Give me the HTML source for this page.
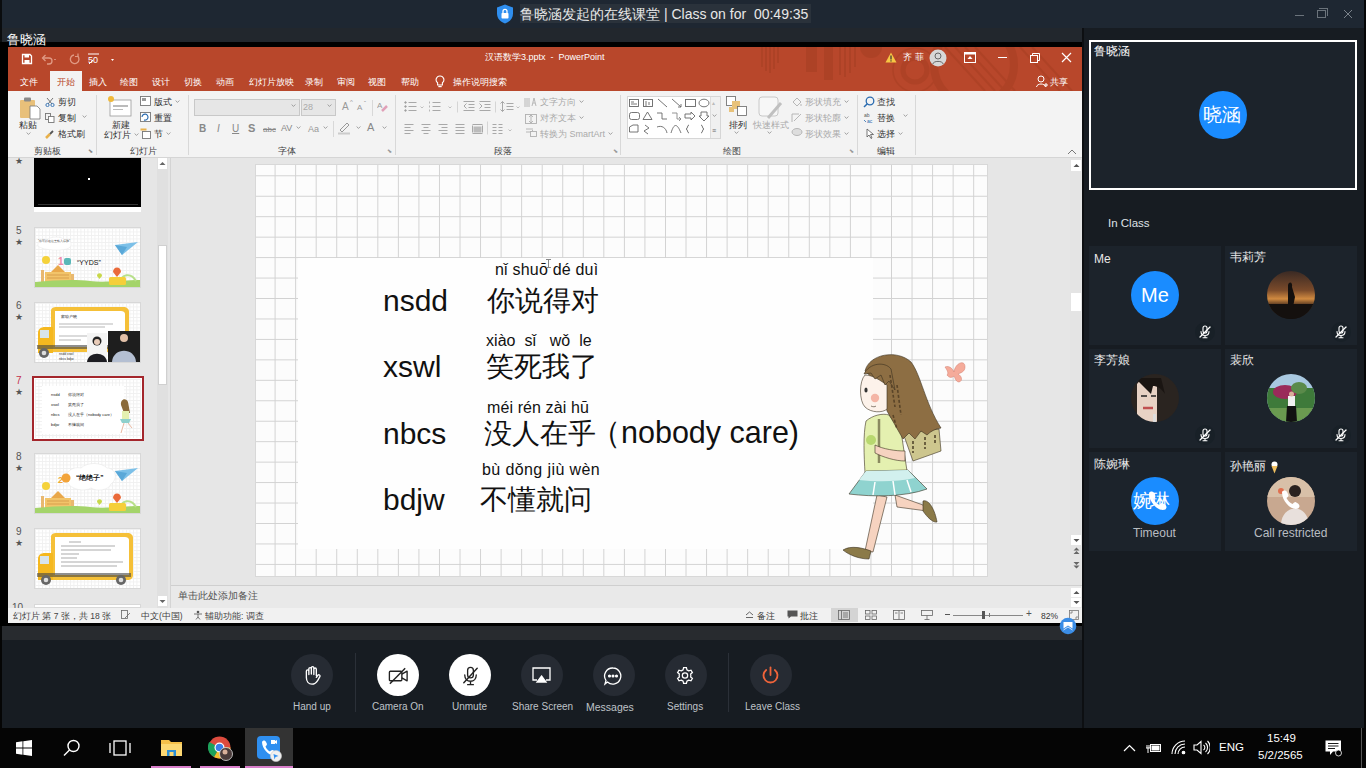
<!DOCTYPE html>
<html><head><meta charset="utf-8">
<style>
*{margin:0;padding:0;box-sizing:border-box}
html,body{width:1366px;height:768px;overflow:hidden;background:#171c22;font-family:"Liberation Sans",sans-serif}
.a{position:absolute}
.t{position:absolute;white-space:nowrap;line-height:1}
.rb{color:#2f2f2f;font-size:9px}
.gl{color:#444;font-size:9px}
.sep{position:absolute;width:1px;background:#d8d8d8}
</style></head><body>
<!-- top title bar -->
<div class="a" style="left:0;top:0;width:1366px;height:28px;background:#1e2732"></div>
<div class="a" style="left:0;top:0;width:2px;height:42px;background:#0a0c0e"></div>
<div class="a" style="left:1364px;top:0;width:2px;height:28px;background:#050607"></div><div class="a" style="left:1363px;top:28px;width:3px;height:700px;background:#050607"></div>
<!-- title center -->
<svg class="a" style="left:496px;top:4px" width="18" height="20" viewBox="0 0 18 20"><path d="M9 0.5 L17 3.5 V9.5 C17 14.5 13.5 17.8 9 19.5 C4.5 17.8 1 14.5 1 9.5 V3.5 Z" fill="#2f8ff0"/><rect x="5.5" y="9" width="7" height="5.5" rx="0.8" fill="#fff"/><path d="M7 9 V7.3 A2 2 0 0 1 11 7.3 V9" stroke="#fff" stroke-width="1.3" fill="none"/></svg>
<div class="a" style="left:520px;top:4px;width:291px;height:19px;background:#2a323b"></div>
<div class="t" style="left:520px;top:7px;font-size:14px;color:#e8e8e8">鲁晓涵发起的在线课堂 | Class on for&nbsp; 00:49:35</div>
<!-- window controls -->
<div class="a" style="left:1295px;top:15px;width:9px;height:1px;background:#6b737b"></div>
<div class="a" style="left:1317px;top:10px;width:9px;height:8px;border:1px solid #6b737b"></div>
<div class="a" style="left:1319px;top:8px;width:9px;height:8px;border-top:1px solid #6b737b;border-right:1px solid #6b737b"></div>
<svg class="a" style="left:1343px;top:9px" width="10" height="10"><path d="M1 1 L9 9 M9 1 L1 9" stroke="#7b838b" stroke-width="1"/></svg>

<!-- left share area -->
<div class="a" style="left:2px;top:28px;width:1080px;height:14px;background:#22272d"></div>
<div class="a" style="left:0;top:42px;width:1083px;height:584px;background:#000"></div>

<!-- PPT window -->
<div class="a" style="left:8px;top:47px;width:1074px;height:575px;background:#e6e6e6"></div>
<!-- ppt title bar -->
<div class="a" style="left:8px;top:47px;width:1074px;height:44px;background:#b8472b"></div>
<svg class="a" style="left:640px;top:47px" width="442" height="44" viewBox="0 0 442 44">
<g fill="#a53f22" opacity="0.55">
<rect x="121" y="0" width="2" height="20"/><rect x="125" y="0" width="2" height="24"/><rect x="129" y="0" width="2" height="26"/><rect x="133" y="0" width="2" height="22"/><rect x="137" y="0" width="2" height="16"/>
<rect x="166" y="0" width="11" height="25"/><rect x="184" y="0" width="9" height="33"/>
<rect x="199" y="0" width="2" height="28"/><rect x="204" y="0" width="2" height="30"/><rect x="209" y="0" width="2" height="26"/><rect x="214" y="0" width="2" height="20"/>
<circle cx="231" cy="0" r="11"/>
</g>
<g fill="none" stroke="#a53f22" opacity="0.5">
<circle cx="275" cy="23" r="12" stroke-width="5"/>
<circle cx="275" cy="23" r="22" stroke-width="1.5"/>
<circle cx="334" cy="18" r="40" stroke-width="8"/>
<path d="M305 0 L345 44 M315 0 L355 44 M325 0 L365 44 M335 0 L375 44 M380 0 L420 44 M392 0 L432 44" stroke-width="2"/>
</g>
</svg>
<!-- quick access -->
<svg class="a" style="left:21px;top:53px" width="100" height="12" viewBox="0 0 100 12">
<path d="M1.5 1.5 H9 L10.5 3 V10.5 H1.5 Z" fill="none" stroke="#fff" stroke-width="1.3"/><rect x="3.5" y="1.5" width="4.5" height="3" fill="#fff"/><rect x="3.5" y="7" width="5" height="3.5" fill="#fff"/>
<path d="M22 5 H28 A3 3 0 0 1 28 11 H26" fill="none" stroke="#e09a85" stroke-width="1.3"/><path d="M24.5 2 L21.5 5 L24.5 8" fill="none" stroke="#e09a85" stroke-width="1.3"/>
<rect x="33" y="6" width="2" height="1" fill="#d88a74"/>
<path d="M56.5 3 A4.3 4.3 0 1 1 53 2" fill="none" stroke="#e09a85" stroke-width="1.3"/><path d="M57 0.5 V3.5 H54" fill="none" stroke="#e09a85" stroke-width="1.2"/>
<rect x="67" y="0.5" width="11" height="1" fill="#fff"/><text x="67" y="10" font-size="9" fill="#fff" font-family="Liberation Sans">50</text><path d="M68 11 L72 7" stroke="#fff" stroke-width="1"/>
<path d="M90 6 L93 6 L91.5 8 Z" fill="#fff"/>
</svg>
<div class="t" style="left:485px;top:53px;font-size:9px;color:#fff;letter-spacing:0px">汉语数学3.pptx&nbsp; -&nbsp; PowerPoint</div>
<!-- right title items -->
<svg class="a" style="left:885px;top:52px" width="12" height="11" viewBox="0 0 12 11"><path d="M6 0.5 L11.5 10.5 H0.5 Z" fill="#f7c644"/><rect x="5.4" y="3.5" width="1.2" height="4" fill="#333"/><rect x="5.4" y="8.3" width="1.2" height="1.2" fill="#333"/></svg>
<div class="t" style="left:903px;top:53px;font-size:9px;color:#fff">齐 菲</div>
<svg class="a" style="left:929px;top:49px" width="18" height="18" viewBox="0 0 18 18"><circle cx="9" cy="9" r="8.5" fill="#d7d7d7"/><circle cx="9" cy="7" r="3" fill="none" stroke="#666" stroke-width="1"/><path d="M3.8 15 C4.5 11.5 13.5 11.5 14.2 15" fill="none" stroke="#666" stroke-width="1"/></svg>
<svg class="a" style="left:964px;top:52px" width="12" height="11" viewBox="0 0 12 11"><rect x="0.5" y="0.5" width="11" height="10" fill="none" stroke="#fff" stroke-width="1"/><rect x="0.5" y="0.5" width="11" height="2" fill="#fff"/><path d="M6 4 L3.5 7 H8.5 Z" fill="#fff"/></svg>
<div class="a" style="left:998px;top:57px;width:9px;height:1px;background:#fff"></div>
<svg class="a" style="left:1029px;top:52px" width="12" height="12" viewBox="0 0 12 12"><rect x="1.5" y="3.5" width="7" height="7" fill="none" stroke="#fff" stroke-width="1"/><path d="M3.5 3.5 V1.5 H10.5 V8.5 H8.5" fill="none" stroke="#fff" stroke-width="1"/></svg>
<svg class="a" style="left:1061px;top:52px" width="11" height="11"><path d="M1 1 L10 10 M10 1 L1 10" stroke="#fff" stroke-width="1.2"/></svg>
<!-- tabs -->
<div class="a" style="left:50px;top:71px;width:32px;height:20px;background:#f3f3f3"></div>
<div class="t" style="left:20px;top:78px;font-size:9px;color:#fff">文件</div>
<div class="t" style="left:57px;top:78px;font-size:9px;color:#b8472b">开始</div>
<div class="t" style="left:89px;top:78px;font-size:9px;color:#fff">插入</div>
<div class="t" style="left:120px;top:78px;font-size:9px;color:#fff">绘图</div>
<div class="t" style="left:152px;top:78px;font-size:9px;color:#fff">设计</div>
<div class="t" style="left:184px;top:78px;font-size:9px;color:#fff">切换</div>
<div class="t" style="left:216px;top:78px;font-size:9px;color:#fff">动画</div>
<div class="t" style="left:249px;top:78px;font-size:9px;color:#fff">幻灯片放映</div>
<div class="t" style="left:305px;top:78px;font-size:9px;color:#fff">录制</div>
<div class="t" style="left:337px;top:78px;font-size:9px;color:#fff">审阅</div>
<div class="t" style="left:368px;top:78px;font-size:9px;color:#fff">视图</div>
<div class="t" style="left:401px;top:78px;font-size:9px;color:#fff">帮助</div>
<svg class="a" style="left:435px;top:75px" width="10" height="13" viewBox="0 0 10 13"><path d="M5 1 A3.8 3.8 0 0 0 2.6 7.8 V10 H7.4 V7.8 A3.8 3.8 0 0 0 5 1 Z" fill="none" stroke="#fff" stroke-width="1.1"/><rect x="3.3" y="11" width="3.4" height="1.2" fill="#fff"/></svg>
<div class="t" style="left:453px;top:78px;font-size:9px;color:#fff">操作说明搜索</div>
<svg class="a" style="left:1036px;top:75px" width="12" height="13" viewBox="0 0 12 13"><circle cx="5" cy="4" r="3" fill="none" stroke="#fff" stroke-width="1"/><path d="M0.5 12 C1 8 9 8 9.5 12" fill="none" stroke="#fff" stroke-width="1"/><path d="M8 10 H12 M10 8 V12" stroke="#fff" stroke-width="1"/></svg>
<div class="t" style="left:1050px;top:78px;font-size:9px;color:#fff">共享</div>
<!-- ribbon -->
<div class="a" style="left:8px;top:91px;width:1074px;height:66px;background:#f3f3f3"></div>
<div class="a" style="left:8px;top:157px;width:1074px;height:1px;background:#d5d5d5"></div>
<!-- group 1 clipboard -->
<svg class="a" style="left:19px;top:96px" width="22" height="24" viewBox="0 0 22 24"><rect x="1" y="4" width="15" height="18" rx="1" fill="#e8c07a"/><rect x="5" y="1.5" width="7" height="4" rx="1" fill="#8a8a8a"/><path d="M11 10 H18 L21 13 V23 H11 Z" fill="#fff" stroke="#777" stroke-width="0.8"/></svg>
<div class="t rb" style="left:19px;top:121px">粘贴</div>
<div class="t rb" style="left:26px;top:131px;font-size:7px"><svg width="5" height="3" style="vertical-align:2px"><path d="M0.6 0.5 L2.5 2.4 L4.4 0.5" fill="none" stroke="#8a8a8a" stroke-width="0.8"/></svg></div>
<svg class="a" style="left:45px;top:97px" width="10" height="10" viewBox="0 0 10 10"><path d="M2 1 L7 7 M8 1 L3 7" stroke="#666" stroke-width="0.9"/><circle cx="2.5" cy="8" r="1.6" fill="none" stroke="#2b6cb0" stroke-width="0.9"/><circle cx="7.5" cy="8" r="1.6" fill="none" stroke="#2b6cb0" stroke-width="0.9"/></svg>
<div class="t rb" style="left:58px;top:98px">剪切</div>
<svg class="a" style="left:45px;top:113px" width="10" height="10" viewBox="0 0 10 10"><rect x="0.5" y="0.5" width="5" height="6" fill="none" stroke="#777" stroke-width="0.9"/><rect x="3.5" y="3.5" width="5.5" height="6" fill="#fff" stroke="#777" stroke-width="0.9"/></svg>
<div class="t rb" style="left:58px;top:114px">复制</div>
<div class="t rb" style="left:82px;top:114px;font-size:7px"><svg width="5" height="3" style="vertical-align:2px"><path d="M0.6 0.5 L2.5 2.4 L4.4 0.5" fill="none" stroke="#8a8a8a" stroke-width="0.8"/></svg></div>
<svg class="a" style="left:45px;top:129px" width="10" height="10" viewBox="0 0 10 10"><path d="M1 9 L5 5" stroke="#e8b04a" stroke-width="2.5"/><path d="M5 5 L8 2" stroke="#555" stroke-width="1.8"/></svg>
<div class="t rb" style="left:58px;top:130px">格式刷</div>
<div class="t gl" style="left:34px;top:147px">剪贴板</div>
<div class="t" style="left:88px;top:148px;font-size:6px;color:#888">⬊</div>
<div class="sep" style="left:96px;top:95px;height:60px"></div>
<!-- group 2 slides -->
<svg class="a" style="left:106px;top:95px" width="26" height="22" viewBox="0 0 26 22"><rect x="4" y="5" width="21" height="16" fill="#fff" stroke="#999" stroke-width="0.8"/><rect x="7" y="10" width="15" height="2" fill="#bbb"/><rect x="7" y="14" width="10" height="1" fill="#bbb"/><circle cx="5" cy="4" r="3" fill="#f0b93a"/></svg>
<div class="t rb" style="left:112px;top:121px">新建</div>
<div class="t rb" style="left:104px;top:131px">幻灯片 <svg width="5" height="3" style="vertical-align:2px"><path d="M0.6 0.5 L2.5 2.4 L4.4 0.5" fill="none" stroke="#8a8a8a" stroke-width="0.8"/></svg></div>
<svg class="a" style="left:140px;top:96px" width="11" height="10" viewBox="0 0 11 10"><rect x="0.5" y="0.5" width="10" height="9" fill="#fff" stroke="#777" stroke-width="0.9"/><rect x="2" y="2" width="4" height="3" fill="#999"/></svg>
<div class="t rb" style="left:154px;top:98px">版式 <svg width="5" height="3" style="vertical-align:2px"><path d="M0.6 0.5 L2.5 2.4 L4.4 0.5" fill="none" stroke="#8a8a8a" stroke-width="0.8"/></svg></div>
<svg class="a" style="left:140px;top:112px" width="11" height="10" viewBox="0 0 11 10"><rect x="0.5" y="0.5" width="10" height="9" fill="#fff" stroke="#777" stroke-width="0.9"/><path d="M2 5 A3 3 0 1 1 4 8" fill="none" stroke="#2b6cb0" stroke-width="1.2"/></svg>
<div class="t rb" style="left:154px;top:114px">重置</div>
<svg class="a" style="left:140px;top:128px" width="11" height="11" viewBox="0 0 11 11"><rect x="2.5" y="3.5" width="8" height="7" fill="#fff" stroke="#777" stroke-width="0.9"/><rect x="0.5" y="0.5" width="6" height="2" fill="#e8b04a"/></svg>
<div class="t rb" style="left:154px;top:130px">节 <svg width="5" height="3" style="vertical-align:2px"><path d="M0.6 0.5 L2.5 2.4 L4.4 0.5" fill="none" stroke="#8a8a8a" stroke-width="0.8"/></svg></div>
<div class="t gl" style="left:130px;top:147px">幻灯片</div>
<div class="sep" style="left:188px;top:95px;height:60px"></div>
<!-- group 3 font -->
<div class="a" style="left:194px;top:99px;width:106px;height:17px;background:#e6e6e6;border:1px solid #c8c8c8"></div>
<div class="t" style="left:291px;top:104px;font-size:6px;color:#aaa"><svg width="5" height="3" style="vertical-align:2px"><path d="M0.6 0.5 L2.5 2.4 L4.4 0.5" fill="none" stroke="#8a8a8a" stroke-width="0.8"/></svg></div>
<div class="a" style="left:301px;top:99px;width:35px;height:17px;background:#e6e6e6;border:1px solid #c8c8c8"></div>
<div class="t" style="left:303px;top:103px;font-size:9px;color:#aaa">28</div>
<div class="t" style="left:327px;top:104px;font-size:6px;color:#aaa"><svg width="5" height="3" style="vertical-align:2px"><path d="M0.6 0.5 L2.5 2.4 L4.4 0.5" fill="none" stroke="#8a8a8a" stroke-width="0.8"/></svg></div>
<div class="t" style="left:342px;top:102px;font-size:10px;color:#999">A</div><div class="t" style="left:350px;top:99px;font-size:6px;color:#999">^</div>
<div class="t" style="left:357px;top:104px;font-size:8px;color:#999">A</div><div class="t" style="left:364px;top:100px;font-size:6px;color:#999">ˇ</div>
<div class="sep" style="left:372px;top:100px;height:16px"></div>
<svg class="a" style="left:377px;top:100px" width="11" height="12" viewBox="0 0 11 12"><text x="0" y="8" font-size="8" fill="#999" font-family="Liberation Sans">A</text><path d="M5 11 L10 6" stroke="#e0a0b8" stroke-width="2.5"/></svg>
<div class="t" style="left:199px;top:124px;font-size:10px;color:#888;font-weight:bold">B</div>
<div class="t" style="left:217px;top:124px;font-size:10px;color:#888;font-style:italic">I</div>
<div class="t" style="left:232px;top:124px;font-size:10px;color:#888;text-decoration:underline">U</div>
<div class="t" style="left:248px;top:123px;font-size:11px;color:#888;font-weight:bold">S</div>
<div class="t" style="left:263px;top:126px;font-size:8px;color:#888;text-decoration:line-through">abc</div>
<div class="t" style="left:281px;top:124px;font-size:9px;color:#888">AV</div><div class="t" style="left:296px;top:126px;font-size:6px;color:#aaa"><svg width="5" height="3" style="vertical-align:2px"><path d="M0.6 0.5 L2.5 2.4 L4.4 0.5" fill="none" stroke="#8a8a8a" stroke-width="0.8"/></svg></div>
<div class="t" style="left:308px;top:125px;font-size:9px;color:#999">Aa</div><div class="t" style="left:323px;top:126px;font-size:6px;color:#aaa"><svg width="5" height="3" style="vertical-align:2px"><path d="M0.6 0.5 L2.5 2.4 L4.4 0.5" fill="none" stroke="#8a8a8a" stroke-width="0.8"/></svg></div>
<div class="sep" style="left:333px;top:121px;height:16px"></div>
<svg class="a" style="left:338px;top:121px" width="14" height="14" viewBox="0 0 14 14"><path d="M2 9 L9 2 L11 4 L4 11 Z" fill="none" stroke="#999" stroke-width="1"/><rect x="0" y="11.5" width="12" height="2" fill="#ccc"/></svg>
<div class="t" style="left:356px;top:126px;font-size:6px;color:#aaa"><svg width="5" height="3" style="vertical-align:2px"><path d="M0.6 0.5 L2.5 2.4 L4.4 0.5" fill="none" stroke="#8a8a8a" stroke-width="0.8"/></svg></div>
<div class="t" style="left:367px;top:122px;font-size:11px;color:#888">A</div>
<div class="t" style="left:382px;top:126px;font-size:6px;color:#aaa"><svg width="5" height="3" style="vertical-align:2px"><path d="M0.6 0.5 L2.5 2.4 L4.4 0.5" fill="none" stroke="#8a8a8a" stroke-width="0.8"/></svg></div>
<div class="t gl" style="left:278px;top:147px">字体</div>
<div class="t" style="left:387px;top:148px;font-size:6px;color:#999">⬊</div>
<div class="sep" style="left:395px;top:95px;height:60px"></div>
<!-- group 4 paragraph -->
<svg class="a" style="left:402px;top:100px" width="220" height="36" viewBox="0 0 220 36" stroke="#a8a8a8" stroke-width="1" fill="none"><g transform="translate(0.5,0.5)">
<g><circle cx="3" cy="2" r="0.8" fill="#999"/><circle cx="3" cy="6" r="0.8" fill="#999"/><circle cx="3" cy="10" r="0.8" fill="#999"/><path d="M6 2H14M6 6H14M6 10H14"/></g>
<path d="M18 6 L19.5 7.5 L21 6" stroke-width="0.7"/>
<g><path d="M27 1V3 M27 5V7 M27 9V11" stroke-width="0.8"/><path d="M30 2H38M30 6H38M30 10H38"/></g>
<path d="M46 6 L47.5 7.5 L49 6" stroke-width="0.7"/>
<path d="M55 1V12" stroke="#d5d5d5"/>
<g><path d="M61 1H72M66 4H72M66 7H72M61 10H72"/><path d="M64 3 L61.5 5.5 L64 8"/></g>
<g><path d="M77 1H88M82 4H88M82 7H88M77 10H88"/><path d="M77 3 L79.5 5.5 L77 8"/></g>
<path d="M93 1V12" stroke="#d5d5d5"/>
<g><path d="M100 1V11M98 3L100 1L102 3M98 9L100 11L102 9"/><path d="M104 3H111M104 6H111M104 9H111"/></g>
<path d="M114 6 L115.5 7.5 L117 6" stroke-width="0.7"/>
<!-- row2 -->
<g transform="translate(0,23)"><path d="M2 1H11M2 4H8M2 7H11M2 10H8"/></g>
<g transform="translate(18,23)"><path d="M1 1H10M3 4H8M1 7H10M3 10H8"/></g>
<g transform="translate(35,23)"><path d="M1 1H10M4 4H10M1 7H10M4 10H10"/></g>
<g transform="translate(52,23)"><path d="M1 1H10M1 4H10M1 7H10M1 10H10"/></g>
<g transform="translate(69,23)"><path d="M1 1H11M1 10H11M1 2V9M11 2V9"/><rect x="2" y="3" width="8" height="6" fill="#bbb" stroke="none"/></g>
<path d="M85 21V34" stroke="#d5d5d5"/>
<g transform="translate(89,23)"><path d="M1 1H5M1 4H5M1 7H5M1 10H5M7 1H11M7 4H11M7 7H11M7 10H11"/></g>
<path d="M106 29 L107.5 30.5 L109 29" stroke-width="0.7"/>
</g></svg>
<svg class="a" style="left:524px;top:96px" width="14" height="42" viewBox="0 0 14 42" stroke="#b0b0b0" fill="none" stroke-width="0.9">
<path d="M1 2V11M3 2V11M5 2V11"/><path d="M8 10 L10 2 L12 10 M9 7H11"/>
<rect x="1.5" y="18.5" width="11" height="9"/><path d="M7 19V27M5 21L7 19L9 21M5 25L7 27L9 25"/>
<path d="M2 33H9M2 36H6M7 36 L9 34"/><rect x="6.5" y="35.5" width="6" height="5"/>
</svg>
<div class="t" style="left:540px;top:98px;font-size:9px;color:#aaa">文字方向 <svg width="5" height="3" style="vertical-align:2px"><path d="M0.6 0.5 L2.5 2.4 L4.4 0.5" fill="none" stroke="#8a8a8a" stroke-width="0.8"/></svg></div>
<div class="t" style="left:540px;top:114px;font-size:9px;color:#aaa">对齐文本 <svg width="5" height="3" style="vertical-align:2px"><path d="M0.6 0.5 L2.5 2.4 L4.4 0.5" fill="none" stroke="#8a8a8a" stroke-width="0.8"/></svg></div>
<div class="t" style="left:540px;top:130px;font-size:9px;color:#aaa">转换为 SmartArt <svg width="5" height="3" style="vertical-align:2px"><path d="M0.6 0.5 L2.5 2.4 L4.4 0.5" fill="none" stroke="#8a8a8a" stroke-width="0.8"/></svg></div>
<div class="t gl" style="left:494px;top:147px">段落</div>
<div class="t" style="left:613px;top:148px;font-size:6px;color:#999">⬊</div>
<div class="sep" style="left:620px;top:95px;height:60px"></div>
<!-- group 5 drawing -->
<div class="a" style="left:627px;top:96px;width:94px;height:43px;background:#fff;border:1px solid #d6d6d6"></div>
<div class="a" style="left:710px;top:97px;width:10px;height:41px;background:#f0f0f0;border-left:1px solid #ddd"></div>
<svg class="a" style="left:628px;top:97px" width="92" height="42" viewBox="0 0 92 42" stroke="#666" stroke-width="0.9" fill="none"><g transform="translate(0,0)">
<rect x="1.5" y="2.5" width="9" height="7"/><path d="M3 5H6M3 7H9"/>
<rect x="15.5" y="2.5" width="9" height="7"/><path d="M18 4V9M21 5V8"/>
<path d="M30 2 L39 10"/><path d="M44 2 L53 10 M50 10H53V7"/>
<rect x="57.5" y="2.5" width="10" height="7"/><ellipse cx="76" cy="6" rx="5" ry="3.8"/>
<rect x="1.5" y="15.5" width="10" height="7" rx="2"/><path d="M15 22.5 L19.5 15 L24 22.5 Z"/>
<path d="M29 16H34V22H39"/><path d="M44 16H49V22H53 M51 20L53 22L51 24" stroke="#888"/>
<path d="M57 17H63V15L67 19L63 23V21H57Z"/><path d="M73 15H79V19H81L76 24L71 19H73Z"/>
<path d="M1.5 35 V30 L5 28 H10 V35 Z"/><path d="M17 28 L21 31 L16 34 L20 37" />
<path d="M29 30 C34 28 38 31 39 36"/><path d="M43 36 C46 26 49 26 53 36"/>
<path d="M61 28 C59 28 60 32 58 32 C60 32 59 36 61 36"/><path d="M73 28 C75 28 74 32 76 32 C74 32 75 36 73 36"/>
</g></svg>
<div class="t" style="left:712px;top:100px;font-size:6px;color:#bbb">▴</div>
<div class="t" style="left:712px;top:114px;font-size:6px;color:#666"><svg width="5" height="3" style="vertical-align:2px"><path d="M0.6 0.5 L2.5 2.4 L4.4 0.5" fill="none" stroke="#8a8a8a" stroke-width="0.8"/></svg></div>
<div class="t" style="left:712px;top:127px;font-size:7px;color:#666">≡</div>
<svg class="a" style="left:726px;top:96px" width="22" height="20" viewBox="0 0 22 20"><rect x="0.5" y="0.5" width="9" height="9" fill="#fff" stroke="#666" stroke-width="0.8"/><rect x="6" y="5" width="8" height="8" fill="#e8c27a"/><rect x="11.5" y="10.5" width="9" height="9" fill="#fff" stroke="#666" stroke-width="0.8"/><rect x="3" y="11" width="5" height="5" fill="#e8c27a"/></svg>
<div class="t rb" style="left:729px;top:121px">排列</div>
<div class="t" style="left:734px;top:131px;font-size:6px;color:#888"><svg width="5" height="3" style="vertical-align:2px"><path d="M0.6 0.5 L2.5 2.4 L4.4 0.5" fill="none" stroke="#8a8a8a" stroke-width="0.8"/></svg></div>
<svg class="a" style="left:758px;top:96px" width="26" height="24" viewBox="0 0 26 24"><rect x="1" y="1" width="19" height="19" rx="3" fill="#f7f7f7" stroke="#c8c8c8" stroke-width="1"/><path d="M10 22 L23 7" stroke="#c0c0c0" stroke-width="3"/></svg>
<div class="t" style="left:753px;top:121px;font-size:9px;color:#aaa">快速样式</div>
<div class="t" style="left:767px;top:131px;font-size:6px;color:#bbb"><svg width="5" height="3" style="vertical-align:2px"><path d="M0.6 0.5 L2.5 2.4 L4.4 0.5" fill="none" stroke="#8a8a8a" stroke-width="0.8"/></svg></div>
<svg class="a" style="left:791px;top:96px" width="12" height="42" viewBox="0 0 12 42" fill="none" stroke="#b0b0b0" stroke-width="0.9">
<path d="M2 6 L6 2 L10 6 L6 10 Z"/><path d="M10 8 V10"/>
<path d="M1 26 L1 18 H8 M3 25 L10 18"/>
<ellipse cx="6" cy="36" rx="5" ry="3.5" fill="#ddd"/>
</svg>
<div class="t" style="left:805px;top:98px;font-size:9px;color:#aaa">形状填充 <svg width="5" height="3" style="vertical-align:2px"><path d="M0.6 0.5 L2.5 2.4 L4.4 0.5" fill="none" stroke="#8a8a8a" stroke-width="0.8"/></svg></div>
<div class="t" style="left:805px;top:114px;font-size:9px;color:#aaa">形状轮廓 <svg width="5" height="3" style="vertical-align:2px"><path d="M0.6 0.5 L2.5 2.4 L4.4 0.5" fill="none" stroke="#8a8a8a" stroke-width="0.8"/></svg></div>
<div class="t" style="left:805px;top:130px;font-size:9px;color:#aaa">形状效果 <svg width="5" height="3" style="vertical-align:2px"><path d="M0.6 0.5 L2.5 2.4 L4.4 0.5" fill="none" stroke="#8a8a8a" stroke-width="0.8"/></svg></div>
<div class="t gl" style="left:723px;top:147px">绘图</div>
<div class="t" style="left:849px;top:148px;font-size:6px;color:#999">⬊</div>
<div class="sep" style="left:857px;top:95px;height:60px"></div>
<!-- group 6 editing -->
<svg class="a" style="left:863px;top:96px" width="12" height="12" viewBox="0 0 12 12"><circle cx="7" cy="5" r="3.8" fill="none" stroke="#2b6cb0" stroke-width="1.3"/><path d="M4.3 7.7 L1 11" stroke="#2b6cb0" stroke-width="1.5"/></svg>
<div class="t rb" style="left:877px;top:98px;color:#333">查找</div>
<svg class="a" style="left:863px;top:112px" width="12" height="12" viewBox="0 0 12 12"><text x="1" y="5" font-size="5" fill="#555" font-family="Liberation Sans">ab</text><text x="4" y="11" font-size="5" fill="#2b6cb0" font-family="Liberation Sans">ac</text><path d="M1 8 L3 10" stroke="#2b6cb0" stroke-width="0.8"/></svg>
<div class="t rb" style="left:877px;top:114px;color:#333">替换</div>
<div class="t" style="left:903px;top:114px;font-size:6px;color:#555"><svg width="5" height="3" style="vertical-align:2px"><path d="M0.6 0.5 L2.5 2.4 L4.4 0.5" fill="none" stroke="#8a8a8a" stroke-width="0.8"/></svg></div>
<svg class="a" style="left:866px;top:128px" width="9" height="11" viewBox="0 0 9 11"><path d="M1 1 V9 L3 7 L5 10.5 L6 10 L4.5 6.5 H7.5 Z" fill="#fff" stroke="#555" stroke-width="0.8"/></svg>
<div class="t rb" style="left:877px;top:130px;color:#333">选择 <svg width="5" height="3" style="vertical-align:2px"><path d="M0.6 0.5 L2.5 2.4 L4.4 0.5" fill="none" stroke="#8a8a8a" stroke-width="0.8"/></svg></div>
<div class="t gl" style="left:877px;top:147px;color:#333">编辑</div>
<div class="sep" style="left:915px;top:95px;height:60px"></div>
<svg class="a" style="left:1067px;top:149px" width="10" height="6"><path d="M1 5 L5 1 L9 5" fill="none" stroke="#777" stroke-width="1"/></svg>
<div class="a" style="left:8px;top:158px;width:162px;height:450px;background:#e6e6e6"></div>
<div class="a" style="left:170px;top:158px;width:1px;height:450px;background:#d4d4d4"></div>
<div class="a" style="left:157px;top:158px;width:11px;height:450px;background:#e0e0e0"></div>
<div class="a" style="left:158px;top:158px;width:9px;height:11px;background:#fff"></div>
<svg class="a" style="left:159px;top:161px" width="7" height="5"><path d="M0.5 4 L3.5 1 L6.5 4 Z" fill="#666"/></svg>
<div class="a" style="left:158px;top:245px;width:9px;height:140px;background:#fff;border:1px solid #d0d0d0"></div>
<div class="a" style="left:158px;top:596px;width:9px;height:10px;background:#fff"></div>
<svg class="a" style="left:159px;top:599px" width="7" height="5"><path d="M0.5 1 L3.5 4 L6.5 1 Z" fill="#666"/></svg>
<div class="t" style="left:16px;top:226px;font-size:10px;color:#555">5</div>
<div class="t" style="left:15px;top:238px;font-size:9px;color:#555">★</div>
<div class="t" style="left:16px;top:301px;font-size:10px;color:#555">6</div>
<div class="t" style="left:15px;top:313px;font-size:9px;color:#555">★</div>
<div class="t" style="left:16px;top:376px;font-size:10px;color:#c4314b">7</div>
<div class="t" style="left:15px;top:388px;font-size:9px;color:#555">★</div>
<div class="t" style="left:16px;top:452px;font-size:10px;color:#555">8</div>
<div class="t" style="left:15px;top:464px;font-size:9px;color:#555">★</div>
<div class="t" style="left:16px;top:527px;font-size:10px;color:#555">9</div>
<div class="t" style="left:15px;top:539px;font-size:9px;color:#555">★</div>
<div class="t" style="left:12px;top:603px;font-size:10px;color:#555">10</div>
<div class="t" style="left:15px;top:157px;font-size:9px;color:#555">★</div>
<div class="a" style="left:34px;top:158px;width:107px;height:54px;background:#fff"></div>
<div class="a" style="left:34px;top:158px;width:107px;height:49px;background:#000"></div>
<div class="a" style="left:38px;top:204px;width:100px;height:1px;background:#333"></div>
<div class="a" style="left:88px;top:178px;width:2px;height:2px;background:#fff"></div>
<div class="a" style="left:34px;top:227px;width:107px;height:61px;background:#fff;border:1px solid #d8d8d8"></div>
<div class="a" style="left:35px;top:228px;width:105px;height:59px;background-image:linear-gradient(#f0f0f0 1px,transparent 1px),linear-gradient(90deg,#f0f0f0 1px,transparent 1px);background-size:3.5px 3.5px"></div>
<svg class="a" style="left:35px;top:228px" width="105" height="59" viewBox="0 0 105 59"><path d="M3 18 C2 12 8 10 12 12 C16 8 26 8 30 12 C36 11 38 17 34 20 C30 23 8 23 3 18 Z" fill="#fff" stroke="#e6e6e6" stroke-width="0.5"/><text x="3" y="14" font-size="3" fill="#444" font-family="Liberation Sans">“你可以在这里输入标题”</text><text x="23" y="37" font-size="10" fill="#f08aa8" font-weight="bold" font-family="Liberation Sans">1</text><rect x="29" y="30" width="7" height="7" rx="2" fill="#5ab8b8"/><text x="42" y="37" font-size="7" fill="#111" font-family="Liberation Sans">“YYDS”</text><g><rect x="10" y="44" width="26" height="11" fill="#f2c46a"/><path d="M16 44 L23 37 L30 44 Z" fill="#e9a84a"/><path d="M12 47 H34 M12 50 H34" stroke="#c8883a" stroke-width="0.6"/><rect x="6" y="42" width="3" height="13" fill="#e8b870"/><rect x="36" y="46" width="3" height="9" fill="#e8b870"/><path d="M0 54 C20 52 40 51 55 53 C70 55 90 52 105 52 V59 H0 Z" fill="#a4d46a"/><path d="M85 55 C86 46 96 44 101 53" fill="none" stroke="#b8e08a" stroke-width="2"/><rect x="74" y="49" width="17" height="8" rx="1.5" fill="#f5cf3a"/><path d="M78 44 A4 4.5 0 1 1 86 44 L82 49 Z" fill="#ea6a3a"/><path d="M62 48 A2.5 2.8 0 1 1 67 48 L64.5 51 Z" fill="#c8d84a"/><path d="M80 17 L103 14 L87 27 Z" fill="#7cc0e8"/><path d="M80 17 L92 19 L87 27 Z" fill="#5aa8d8"/><circle cx="11" cy="32" r="4" fill="#f5d23a"/></g></svg>
<div class="a" style="left:34px;top:302px;width:107px;height:61px;background:#fff;border:1px solid #d8d8d8"></div>
<div class="a" style="left:35px;top:303px;width:105px;height:59px;background-image:linear-gradient(#f0f0f0 1px,transparent 1px),linear-gradient(90deg,#f0f0f0 1px,transparent 1px);background-size:3.5px 3.5px"></div>
<svg class="a" style="left:35px;top:303px" width="105" height="59" viewBox="0 0 105 59"><path d="M16 8 C16 5 18 4 22 4 H88 C92 4 94 6 94 9 V44 C94 47 92 49 88 49 H16 Z" fill="#f5c038"/><path d="M20 8 H86 C88 8 90 9 90 11 V44 H20 Z" fill="#fff"/><path d="M3 30 C3 26 6 24 10 24 H18 V50 H3 Z" fill="#f5b81f"/><rect x="5" y="27" width="9" height="8" fill="#d8e4ec"/><rect x="2" y="42" width="90" height="4" fill="#444" opacity="0.6"/><circle cx="9" cy="50" r="5" fill="#666"/><circle cx="9" cy="50" r="2.3" fill="#ddd"/><text x="26" y="15" font-size="4" fill="#333" font-family="Liberation Sans">家喻户晓</text><path d="M24 21 H78 M24 24 H70 M24 33 H52 M24 37 H46" stroke="#999" stroke-width="0.7"/><text x="24" y="52" font-size="3.3" fill="#333" font-family="Liberation Sans">nsdd   xswl</text><text x="24" y="57" font-size="3.3" fill="#333" font-family="Liberation Sans">nbcs   bdjw</text><rect x="52" y="30" width="20" height="29" fill="#f4f4f4"/><circle cx="62" cy="38" r="4.5" fill="#222"/><path d="M52 59 C53 48 71 48 72 59 Z" fill="#1d1d22"/><circle cx="62" cy="39" r="3" fill="#e8cbb8"/><rect x="73" y="28" width="32" height="31" fill="#1e1e1e"/><circle cx="89" cy="35" r="4" fill="#e2c0a8"/><path d="M77 59 C78 44 100 44 101 59 Z" fill="#b4bfd2"/></svg>
<div class="a" style="left:32px;top:376px;width:112px;height:65px;border:2px solid #a4262c;background:#fff"></div>
<div class="a" style="left:35px;top:379px;width:106px;height:59px;background-image:linear-gradient(#f0f0f0 1px,transparent 1px),linear-gradient(90deg,#f0f0f0 1px,transparent 1px);background-size:3.5px 3.5px"></div>
<div class="a" style="left:42px;top:386px;width:82px;height:48px;background:#fff"></div>
<svg class="a" style="left:35px;top:379px" width="106" height="59" viewBox="0 0 106 59"><g font-size="4" fill="#222" font-family="Liberation Sans"><text x="16" y="17">nsdd</text><text x="33" y="17">你说得对</text><text x="16" y="27">xswl</text><text x="33" y="27">笑死我了</text><text x="16" y="37">nbcs</text><text x="33" y="37">没人在乎（nobody care）</text><text x="16" y="47">bdjw</text><text x="33" y="47">不懂就问</text></g><path d="M86 26 C85 20 91 18 93 23 L95 34 L89 34 Z" fill="#8a6a3a"/><rect x="87" y="32" width="7" height="8" fill="#e4f0b0"/><path d="M85 40 H96 L94 44 H87 Z" fill="#8fd0cc"/><path d="M89 44 L86 54 M93 44 L97 49" stroke="#e8b8a0" stroke-width="1"/></svg>
<div class="a" style="left:34px;top:453px;width:107px;height:61px;background:#fff;border:1px solid #d8d8d8"></div>
<div class="a" style="left:35px;top:454px;width:105px;height:59px;background-image:linear-gradient(#f0f0f0 1px,transparent 1px),linear-gradient(90deg,#f0f0f0 1px,transparent 1px);background-size:3.5px 3.5px"></div>
<svg class="a" style="left:35px;top:454px" width="105" height="59" viewBox="0 0 105 59"><path d="M32 28 C28 20 36 12 46 14 C52 8 66 8 72 14 C80 14 84 24 76 30 C74 36 62 38 56 34 C50 38 36 36 32 28 Z" fill="#fff" stroke="#e8e8e8" stroke-width="0.6"/><text x="23" y="29" font-size="9" fill="#f0a830" font-weight="bold" font-family="Liberation Sans">2</text><circle cx="31" cy="24" r="4.5" fill="#f3a43a"/><text x="41" y="26" font-size="6.5" fill="#111" font-weight="bold" font-family="Liberation Sans">“绝绝子”</text><g><rect x="10" y="44" width="26" height="11" fill="#f2c46a"/><path d="M16 44 L23 37 L30 44 Z" fill="#e9a84a"/><path d="M12 47 H34 M12 50 H34" stroke="#c8883a" stroke-width="0.6"/><rect x="6" y="42" width="3" height="13" fill="#e8b870"/><rect x="36" y="46" width="3" height="9" fill="#e8b870"/><path d="M0 54 C20 52 40 51 55 53 C70 55 90 52 105 52 V59 H0 Z" fill="#a4d46a"/><path d="M85 55 C86 46 96 44 101 53" fill="none" stroke="#b8e08a" stroke-width="2"/><rect x="74" y="49" width="17" height="8" rx="1.5" fill="#f5cf3a"/><path d="M78 44 A4 4.5 0 1 1 86 44 L82 49 Z" fill="#ea6a3a"/><path d="M62 48 A2.5 2.8 0 1 1 67 48 L64.5 51 Z" fill="#c8d84a"/><path d="M80 17 L103 14 L87 27 Z" fill="#7cc0e8"/><path d="M80 17 L92 19 L87 27 Z" fill="#5aa8d8"/><circle cx="11" cy="32" r="4" fill="#f5d23a"/></g></svg>
<div class="a" style="left:34px;top:528px;width:107px;height:61px;background:#fff;border:1px solid #d8d8d8"></div>
<div class="a" style="left:35px;top:529px;width:105px;height:59px;background-image:linear-gradient(#f0f0f0 1px,transparent 1px),linear-gradient(90deg,#f0f0f0 1px,transparent 1px);background-size:3.5px 3.5px"></div>
<svg class="a" style="left:35px;top:529px" width="105" height="59" viewBox="0 0 105 59"><path d="M16 8 C16 5 18 4 22 4 H92 C96 4 98 6 98 9 V46 C98 49 96 51 92 51 H16 Z" fill="#f5c038"/><path d="M20 8 H90 C92 8 94 9 94 11 V46 H20 Z" fill="#fff"/><path d="M3 30 C3 26 6 24 10 24 H18 V51 H3 Z" fill="#f5b81f"/><rect x="5" y="27" width="9" height="8" fill="#d8e4ec"/><rect x="2" y="44" width="94" height="4" fill="#444" opacity="0.6"/><circle cx="11" cy="51" r="5" fill="#666"/><circle cx="11" cy="51" r="2.3" fill="#ddd"/><circle cx="86" cy="51" r="5" fill="#666"/><circle cx="86" cy="51" r="2.3" fill="#ddd"/><path d="M34 13 H46 M26 17 H80 M26 21 H76 M26 25 H44 M26 29 H42 M26 33 H88 M26 37 H82" stroke="#888" stroke-width="0.7"/></svg>
<div class="a" style="left:34px;top:604px;width:107px;height:4px;background:#fff;border:1px solid #d8d8d8"></div>
<div class="a" style="left:171px;top:158px;width:900px;height:427px;background:#e6e6e6"></div>
<div class="a" style="left:1070px;top:158px;width:12px;height:427px;background:#e4e4e4"></div>
<div class="a" style="left:1071px;top:160px;width:10px;height:11px;background:#fff"></div>
<svg class="a" style="left:1073px;top:163px" width="7" height="5"><path d="M0.5 4 L3.5 1 L6.5 4 Z" fill="#555"/></svg>
<div class="a" style="left:1071px;top:293px;width:10px;height:18px;background:#fff"></div>
<div class="a" style="left:1071px;top:535px;width:10px;height:10px;background:#fff"></div>
<svg class="a" style="left:1073px;top:538px" width="7" height="5"><path d="M0.5 1 L3.5 4 L6.5 1 Z" fill="#555"/></svg>
<svg class="a" style="left:1073px;top:547px" width="7" height="30" viewBox="0 0 7 30" fill="#666"><path d="M0.5 3.5 L3.5 0.5 L6.5 3.5Z M0.5 7 L3.5 4 L6.5 7Z M0.5 15 L3.5 18 L6.5 15Z M0.5 18.5 L3.5 21.5 L6.5 18.5Z"/></svg>
<div class="a" style="left:256px;top:165px;width:731px;height:411px;background:#fcfcfc;background-image:linear-gradient(#d2d2d2 1px,transparent 1px),linear-gradient(90deg,#d2d2d2 1px,transparent 1px);background-size:20.55px 20.46px;background-position:18.6px 10.3px;outline:1px solid #d8d8d8"></div>
<div class="a" style="left:298px;top:258px;width:575px;height:291px;background:#fefefe"></div>
<div class="t" style="left:495px;top:262px;font-size:16px;color:#111;letter-spacing:0.2px">nǐ shuō dé duì</div>
<div class="t" style="left:383px;top:286px;font-size:30px;color:#111">nsdd</div>
<div class="t" style="left:487px;top:287px;font-size:28px;color:#111">你说得对</div>
<div class="t" style="left:486px;top:333px;font-size:16px;color:#111;letter-spacing:0.05px">xiào&nbsp; sǐ&nbsp;&nbsp; wǒ&nbsp; le</div>
<div class="t" style="left:383px;top:352px;font-size:30px;color:#111">xswl</div>
<div class="t" style="left:486px;top:353px;font-size:28px;color:#111">笑死我了</div>
<div class="t" style="left:487px;top:400px;font-size:16px;color:#111;letter-spacing:0.1px">méi rén zài hū</div>
<div class="t" style="left:383px;top:419px;font-size:30px;color:#111">nbcs</div>
<div class="t" style="left:484px;top:420px;font-size:28px;color:#111">没人在乎</div>
<div class="t" style="left:590px;top:417px;font-size:30.5px;color:#111">（nobody care)</div>
<div class="t" style="left:482px;top:462px;font-size:16px;color:#111;letter-spacing:0.4px">bù dǒng jiù wèn</div>
<div class="t" style="left:383px;top:485px;font-size:30px;color:#111">bdjw</div>
<div class="t" style="left:480px;top:486px;font-size:28px;color:#111">不懂就问</div>
<!-- notes -->
<div class="a" style="left:171px;top:585px;width:911px;height:23px;background:#e9e9e9;border-top:1px solid #cfcfcf"></div>
<div class="t" style="left:178px;top:591px;font-size:10px;color:#555">单击此处添加备注</div>
<div class="a" style="left:1071px;top:588px;width:10px;height:9px;background:#fff"></div>
<svg class="a" style="left:1073px;top:590px" width="7" height="5"><path d="M0.5 4 L3.5 1 L6.5 4 Z" fill="#555"/></svg>
<div class="a" style="left:1071px;top:598px;width:10px;height:9px;background:#fff"></div>
<svg class="a" style="left:1073px;top:600px" width="7" height="5"><path d="M0.5 1 L3.5 4 L6.5 1 Z" fill="#555"/></svg>
<!-- status bar -->
<div class="a" style="left:8px;top:608px;width:1074px;height:15px;background:#f1f1f1"></div>
<div class="t" style="left:13px;top:612px;font-size:8.5px;color:#444">幻灯片 第 7 张，共 18 张</div>
<svg class="a" style="left:121px;top:610px" width="10" height="10" viewBox="0 0 10 10"><rect x="0.5" y="0.5" width="6" height="8" fill="none" stroke="#666" stroke-width="0.8"/><path d="M4 8 L9 3" stroke="#666" stroke-width="0.8"/></svg>
<div class="t" style="left:141px;top:612px;font-size:8.5px;color:#444">中文(中国)</div>
<svg class="a" style="left:193px;top:610px" width="10" height="10" viewBox="0 0 10 10"><circle cx="5" cy="2" r="1.3" fill="#555"/><path d="M1 4 H9 M5 4 V7 L3 9.5 M5 7 L7 9.5" stroke="#555" stroke-width="0.8" fill="none"/></svg>
<div class="t" style="left:205px;top:612px;font-size:8.5px;color:#444">辅助功能: 调查</div>
<svg class="a" style="left:745px;top:611px" width="9" height="8"><path d="M1 4 L4.5 1 L8 4 M1 6.5 H8" stroke="#555" fill="none" stroke-width="0.9"/></svg>
<div class="t" style="left:757px;top:612px;font-size:8.5px;color:#333">备注</div>
<svg class="a" style="left:787px;top:610px" width="11" height="9"><path d="M0.5 0.5 H10.5 V6.5 H4 L1.5 8.5 V6.5 H0.5 Z" fill="#555"/></svg>
<div class="t" style="left:800px;top:612px;font-size:8.5px;color:#333">批注</div>
<div class="a" style="left:831px;top:608px;width:27px;height:14px;background:#d4d4d4"></div>
<svg class="a" style="left:838px;top:610px" width="12" height="10" viewBox="0 0 12 10" fill="none" stroke="#666" stroke-width="0.8"><rect x="0.5" y="0.5" width="11" height="9"/><path d="M3.5 0.5 V9.5 M5 3H10M5 5H10M5 7H10"/></svg>
<svg class="a" style="left:865px;top:610px" width="12" height="10" viewBox="0 0 12 10" fill="none" stroke="#666" stroke-width="0.8"><rect x="0.5" y="0.5" width="4.5" height="3.5"/><rect x="7" y="0.5" width="4.5" height="3.5"/><rect x="0.5" y="6" width="4.5" height="3.5"/><rect x="7" y="6" width="4.5" height="3.5"/></svg>
<svg class="a" style="left:893px;top:610px" width="12" height="10" viewBox="0 0 12 10" fill="none" stroke="#666" stroke-width="0.8"><rect x="0.5" y="0.5" width="11" height="9"/><path d="M6 0.5 V9.5 M2 3H4.5M7.5 3H10"/></svg>
<svg class="a" style="left:921px;top:610px" width="12" height="10" viewBox="0 0 12 10" fill="none" stroke="#666" stroke-width="0.8"><rect x="0.5" y="0.5" width="11" height="5"/><path d="M6 5.5 V9.5 M3.5 9.5 H8.5"/></svg>
<div class="a" style="left:945px;top:614px;width:5px;height:1px;background:#555"></div>
<div class="a" style="left:953px;top:615px;width:70px;height:1px;background:#888"></div>
<div class="a" style="left:982px;top:611px;width:3px;height:8px;background:#555"></div>
<div class="a" style="left:989px;top:613px;width:1px;height:4px;background:#777"></div>
<div class="t" style="left:1026px;top:609px;font-size:10px;color:#555">+</div>
<div class="t" style="left:1041px;top:612px;font-size:8.5px;color:#333">82%</div>
<svg class="a" style="left:1069px;top:610px" width="10" height="10" viewBox="0 0 10 10" fill="none" stroke="#777" stroke-width="0.8"><rect x="0.5" y="0.5" width="9" height="9"/><path d="M2 4 V2 H4 M6 8 H8 V6"/></svg>
<!-- bottom black border of ppt window -->
<div class="a" style="left:0;top:623px;width:1083px;height:3px;background:#000"></div>
<svg class="a" style="left:835px;top:345px" width="140" height="220" viewBox="0 0 140 220">
<g stroke="#3a3020" stroke-width="0.6" stroke-linejoin="round">
<!-- back leg -->
<path d="M60 150 L88 160 L92 166 L62 162 Z" fill="#f6d3c0"/>
<path d="M88 156 C94 154 100 165 102 177 C98 178 92 172 88 166 Z" fill="#8b7a48"/>
<!-- front leg -->
<path d="M42 150 L52 152 L38 207 L30 206 Z" fill="#f6d3c0"/>
<path d="M8 205 C16 200 28 203 36 206 L34 214 C24 214 14 210 8 205 Z" fill="#8b7a48"/>
<!-- bag -->
<path d="M68 88 L104 84 L106 106 L78 116 Z" fill="#cdc68e"/>
<path d="M78 96 V108 M90 92 V104 M100 90 V100" stroke="#6b6040" stroke-width="2" stroke-dasharray="3 2"/>
<!-- shirt -->
<path d="M31 76 C38 70 48 68 54 70 L66 86 L72 126 L30 128 C29 110 28 90 31 76 Z" fill="#e4f0b0"/>
<circle cx="36" cy="95" r="5" fill="#b8d870" stroke="none"/>
<path d="M44 74 L44 118" stroke="#8a8a60" stroke-width="2.5"/>
<!-- arm -->
<path d="M40 100 C48 104 60 106 70 106 L70 116 C60 116 48 112 40 108 Z" fill="#f6d3c0"/>
<!-- skirt -->
<path d="M31 126 L73 125 L92 144 C70 152 38 152 14 149 Z" fill="#8fd3cf"/>
<path d="M31 126 L73 125 L80 133 C62 137 42 137 24 135 Z" fill="#d2f0ee" stroke="none"/>
<path d="M40 137 L38 150 M58 136 L60 150 M72 135 L76 147" stroke="#fff" stroke-width="1.5"/>
<!-- hair back -->
<path d="M30 26 C34 9 62 4 76 17 C86 30 90 58 106 83 C100 84 96 86 92 90 L86 86 L80 94 L74 88 L68 94 L60 80 L52 66 L47 42 Z" fill="#8d6e43"/>
<!-- face -->
<path d="M30 30 C24 36 24 56 30 62 C36 68 48 68 52 64 L52 40 C46 36 38 30 30 30 Z" fill="#fdf2ea"/>
<circle cx="40" cy="53" r="4.2" fill="#f4b5a5" stroke="none"/>
<ellipse cx="31" cy="45" rx="1.6" ry="2.6" fill="#333" stroke="none"/>
<path d="M36 61 C38 62 40 62 41 61" fill="none"/>
<!-- fringe -->
<path d="M29 29 C34 18 50 16 56 24 L60 45 L54 36 L50 40 L46 30 L40 34 L36 28 Z" fill="#8d6e43"/>
<path d="M55 30 L60 62 M62 40 L66 70 M58 70 L62 84" stroke="#5a4428" stroke-width="1.6" stroke-dasharray="3 2"/>
<!-- butterfly -->
<path d="M110 22 C114 20 118 24 119 27 C120 18 130 14 130 22 C130 27 125 28 123 29 C127 31 128 36 124 37 C121 37 120 33 119 31 C117 33 114 33 112 30 C114 28 112 25 110 22 Z" fill="#f5ab9a" stroke="#d07a6a" stroke-width="0.5"/>
</g>
</svg>
<svg class="a" style="left:545px;top:258px" width="7" height="11"><path d="M1 1.5 H6 M3.5 1.5 V9.5 M1 9.5 H6" stroke="#888" stroke-width="1"/></svg>
<!--PPT-->
<div class="t" style="left:7px;top:33px;font-size:13px;color:#fff">鲁晓涵</div>


<!-- below ppt -->
<div class="a" style="left:0;top:626px;width:1083px;height:14px;background:#282b2f"></div>
<div class="a" style="left:0;top:640px;width:1083px;height:87px;background:#171c22"></div>
<div class="a" style="left:0;top:626px;width:2px;height:102px;background:#050505"></div>
<div class="a" style="left:1082px;top:28px;width:2px;height:700px;background:#0d0f12"></div>

<!-- right panel -->
<!-- right panel -->
<div class="a" style="left:1084px;top:28px;width:280px;height:700px;background:#171c22"></div>
<div class="a" style="left:1089px;top:40px;width:268px;height:150px;border:2px solid #fff;background:#1c232b"></div>
<div class="t" style="left:1094px;top:45px;font-size:12px;color:#fff">鲁晓涵</div>
<div class="a" style="left:1199px;top:91px;width:48px;height:48px;border-radius:50%;background:#1a8cff"></div>
<div class="t" style="left:1203px;top:105px;font-size:19px;color:#fff">晓涵</div>
<div class="t" style="left:1108px;top:218px;font-size:11.5px;color:#dfe2e6">In Class</div>
<!-- tiles -->
<div class="a" style="left:1089px;top:246px;width:132px;height:99px;background:#1c232b"></div>
<div class="a" style="left:1225px;top:246px;width:132px;height:99px;background:#1c232b"></div>
<div class="a" style="left:1089px;top:349px;width:132px;height:99px;background:#1c232b"></div>
<div class="a" style="left:1225px;top:349px;width:132px;height:99px;background:#1c232b"></div>
<div class="a" style="left:1089px;top:452px;width:132px;height:99px;background:#1c232b"></div>
<div class="a" style="left:1225px;top:452px;width:132px;height:99px;background:#1c232b"></div>
<div class="t" style="left:1094px;top:253px;font-size:12px;color:#e8e8e8">Me</div>
<div class="t" style="left:1230px;top:251px;font-size:12px;color:#e8e8e8">韦莉芳</div>
<div class="t" style="left:1094px;top:354px;font-size:12px;color:#e8e8e8">李芳娘</div>
<div class="t" style="left:1230px;top:354px;font-size:12px;color:#e8e8e8">裴欣</div>
<div class="t" style="left:1094px;top:458px;font-size:12px;color:#e8e8e8">陈婉琳</div>
<div class="t" style="left:1230px;top:460px;font-size:12px;color:#e8e8e8">孙艳丽</div>
<svg class="a" style="left:1270px;top:461px" width="9" height="13" viewBox="0 0 9 13"><circle cx="4.5" cy="3.5" r="3" fill="#fff"/><path d="M1.5 5 L4.5 12.5 L7.5 5 Z" fill="#f0c060"/></svg>
<!-- avatars -->
<div class="a" style="left:1131px;top:271px;width:48px;height:48px;border-radius:50%;background:#1a8cff"></div>
<div class="t" style="left:1141px;top:285px;font-size:20px;color:#fff">Me</div>
<svg class="a" style="left:1267px;top:271px" width="48" height="48" viewBox="0 0 48 48"><defs><clipPath id="c1"><circle cx="24" cy="24" r="24"/></clipPath><linearGradient id="g1" x1="0" y1="0" x2="0" y2="1"><stop offset="0" stop-color="#3a2a24"/><stop offset="0.4" stop-color="#7a4a2a"/><stop offset="0.58" stop-color="#d08a40"/><stop offset="0.7" stop-color="#5a3a22"/><stop offset="1" stop-color="#120e0c"/></linearGradient></defs><g clip-path="url(#c1)"><rect width="48" height="48" fill="url(#g1)"/><rect y="33" width="48" height="15" fill="#14100e"/><path d="M21 14 C22 10 26 11 25 16 L28 26 L26 36 L21 36 Z" fill="#14100e"/></g></svg>
<svg class="a" style="left:1131px;top:374px" width="48" height="48" viewBox="0 0 48 48"><defs><clipPath id="c2"><circle cx="24" cy="24" r="24"/></clipPath></defs><g clip-path="url(#c2)"><rect width="48" height="48" fill="#2a2420"/><path d="M6 10 C10 4 20 4 26 10 L26 48 L6 48 Z" fill="#e8d2c4"/><path d="M4 4 H30 L34 20 C30 14 26 12 22 12 L20 20 Z" fill="#1a1512"/><path d="M12 34 H22" stroke="#c05050" stroke-width="2.5"/><path d="M10 22 H16 M20 22 H25" stroke="#222" stroke-width="1.5"/><rect x="22" y="40" width="3" height="8" fill="#ddd"/></g></svg>
<svg class="a" style="left:1267px;top:374px" width="48" height="48" viewBox="0 0 48 48"><defs><clipPath id="c3"><circle cx="24" cy="24" r="24"/></clipPath></defs><g clip-path="url(#c3)"><rect width="48" height="48" fill="#a8c8e0"/><rect y="14" width="48" height="34" fill="#3e7a3a"/><ellipse cx="18" cy="18" rx="12" ry="7" fill="#9a2a5a"/><ellipse cx="32" cy="14" rx="8" ry="6" fill="#5a8a4a"/><rect y="34" width="48" height="14" fill="#6a9a50"/><rect x="21" y="22" width="7" height="10" fill="#f0f0f0"/><path d="M20 32 H29 L30 48 H19 Z" fill="#111"/><circle cx="24.5" cy="20" r="2.5" fill="#d9b09a"/></g></svg>
<div class="a" style="left:1131px;top:477px;width:48px;height:48px;border-radius:50%;background:#1a8cff"></div>
<div class="t" style="left:1133px;top:491px;font-size:19px;color:#fff;letter-spacing:-1px">婉琳</div>
<svg class="a" style="left:1146px;top:490px" width="22" height="22" viewBox="0 0 22 22"><path d="M3 3 C4 1 7 1 8 3 L9.5 6 C9.5 7.5 8 8.5 7.5 9 C9 12 11 14 13.5 15 C14 14.5 15.5 13 16.5 13 L19 14.5 C21 16 21 18 19 19.5 C14 22 3 14 3 3 Z" fill="#fff"/></svg>
<svg class="a" style="left:1267px;top:477px" width="48" height="48" viewBox="0 0 48 48"><defs><clipPath id="c4"><circle cx="24" cy="24" r="24"/></clipPath></defs><g clip-path="url(#c4)"><rect width="48" height="48" fill="#c8a890"/><rect x="0" y="0" width="48" height="20" fill="#d8c0a8"/><circle cx="28" cy="14" r="6" fill="#2a2220"/><path d="M14 48 C14 28 40 24 42 48 Z" fill="#e8e0dc"/><circle cx="14" cy="14" r="3" fill="#e07050"/></g></svg>
<svg class="a" style="left:1279px;top:489px" width="22" height="22" viewBox="0 0 22 22"><path d="M3 3 C4 1 7 1 8 3 L9.5 6 C9.5 7.5 8 8.5 7.5 9 C9 12 11 14 13.5 15 C14 14.5 15.5 13 16.5 13 L19 14.5 C21 16 21 18 19 19.5 C14 22 3 14 3 3 Z" fill="#fff"/></svg>
<div class="t" style="left:1133px;top:527px;font-size:12px;color:#b9bdc2">Timeout</div>
<div class="t" style="left:1254px;top:527px;font-size:12px;color:#b9bdc2">Call restricted</div>
<!-- mute icons -->
<div class="a" style="left:1195px;top:322px;width:20px;height:20px;border-radius:50%;background:#182027"></div>
<div class="a" style="left:1331px;top:322px;width:20px;height:20px;border-radius:50%;background:#182027"></div>
<div class="a" style="left:1195px;top:425px;width:20px;height:20px;border-radius:50%;background:#182027"></div>
<div class="a" style="left:1331px;top:425px;width:20px;height:20px;border-radius:50%;background:#182027"></div>
<svg class="a" style="left:1198px;top:325px" width="14" height="14" viewBox="0 0 14 14" fill="none" stroke="#fff" stroke-width="1.1" stroke-linecap="round"><rect x="5" y="1" width="4" height="7" rx="2"/><path d="M3 6.5 C3 9 4.8 10.5 7 10.5 C9.2 10.5 11 9 11 6.5 M7 10.5 V12.5 M5 12.8 H9"/><path d="M2 12 L12 2" stroke-width="1.3"/></svg>
<svg class="a" style="left:1334px;top:325px" width="14" height="14" viewBox="0 0 14 14" fill="none" stroke="#fff" stroke-width="1.1" stroke-linecap="round"><rect x="5" y="1" width="4" height="7" rx="2"/><path d="M3 6.5 C3 9 4.8 10.5 7 10.5 C9.2 10.5 11 9 11 6.5 M7 10.5 V12.5 M5 12.8 H9"/><path d="M2 12 L12 2" stroke-width="1.3"/></svg>
<svg class="a" style="left:1198px;top:428px" width="14" height="14" viewBox="0 0 14 14" fill="none" stroke="#fff" stroke-width="1.1" stroke-linecap="round"><rect x="5" y="1" width="4" height="7" rx="2"/><path d="M3 6.5 C3 9 4.8 10.5 7 10.5 C9.2 10.5 11 9 11 6.5 M7 10.5 V12.5 M5 12.8 H9"/><path d="M2 12 L12 2" stroke-width="1.3"/></svg>
<svg class="a" style="left:1334px;top:428px" width="14" height="14" viewBox="0 0 14 14" fill="none" stroke="#fff" stroke-width="1.1" stroke-linecap="round"><rect x="5" y="1" width="4" height="7" rx="2"/><path d="M3 6.5 C3 9 4.8 10.5 7 10.5 C9.2 10.5 11 9 11 6.5 M7 10.5 V12.5 M5 12.8 H9"/><path d="M2 12 L12 2" stroke-width="1.3"/></svg>


<!-- taskbar -->
<div class="a" style="left:0;top:728px;width:1366px;height:40px;background:#050505"></div>
<!-- control bar -->
<div class="a" style="left:355px;top:653px;width:1px;height:59px;background:#2b3038"></div>
<div class="a" style="left:728px;top:653px;width:1px;height:59px;background:#2b3038"></div>
<div class="a" style="left:291px;top:654px;width:42px;height:42px;border-radius:50%;background:#262b33"></div>
<svg class="a" style="left:301px;top:664px;transform:scaleX(-1)" width="23" height="23" viewBox="0 0 24 24" fill="none" stroke="#fff" stroke-width="1.4" stroke-linejoin="round" stroke-linecap="round"><path d="M8 12 V5.5 A1.3 1.3 0 0 1 10.6 5.5 V11 M10.6 10 V4 A1.3 1.3 0 0 1 13.2 4 V10.5 M13.2 10 V5 A1.3 1.3 0 0 1 15.8 5 V11 M15.8 10.5 V7.5 A1.3 1.3 0 0 1 18.4 7.5 V14 C18.4 18 16 21 12.5 21 C9.5 21 8 19.5 6.5 17 L4.2 13 A1.3 1.3 0 0 1 6.3 11.6 L8 14"/></svg>
<div class="t" style="left:293px;top:702px;font-size:10px;color:#bfc3c8">Hand up</div>
<div class="a" style="left:377px;top:654px;width:42px;height:42px;border-radius:50%;background:#fff"></div>
<svg class="a" style="left:387px;top:665px" width="23" height="22" viewBox="0 0 24 22" fill="none" stroke="#222" stroke-width="1.4" stroke-linejoin="round"><rect x="2.5" y="6" width="13" height="10" rx="1"/><path d="M15.5 9 L21 6 V16 L15.5 13"/><path d="M3 19 L19 3" stroke-width="1.5"/></svg>
<div class="t" style="left:372px;top:702px;font-size:10px;color:#bfc3c8">Camera On</div>
<div class="a" style="left:449px;top:654px;width:42px;height:42px;border-radius:50%;background:#fff"></div>
<svg class="a" style="left:459px;top:664px" width="23" height="24" viewBox="0 0 24 24" fill="none" stroke="#222" stroke-width="1.4" stroke-linecap="round"><rect x="9" y="3" width="6" height="11" rx="3"/><path d="M6 11 C6 15 8.5 17.5 12 17.5 C15.5 17.5 18 15 18 11 M12 17.5 V21 M9 21 H15"/><path d="M5 19 L19 4" stroke-width="1.5"/></svg>
<div class="t" style="left:452px;top:702px;font-size:10px;color:#bfc3c8">Unmute</div>
<div class="a" style="left:521px;top:654px;width:42px;height:42px;border-radius:50%;background:#262b33"></div>
<svg class="a" style="left:531px;top:666px" width="21" height="19" viewBox="0 0 21 19" fill="none" stroke="#fff" stroke-width="1.3"><path d="M6 14 H2 V2 H19 V14 H15"/><path d="M10.5 10 L15 16 H6 Z" fill="#fff"/></svg>
<div class="t" style="left:512px;top:702px;font-size:10px;color:#bfc3c8">Share Screen</div>
<div class="a" style="left:593px;top:654px;width:42px;height:42px;border-radius:50%;background:#262b33"></div>
<svg class="a" style="left:603px;top:666px" width="20" height="20" viewBox="0 0 20 20" fill="none" stroke="#fff" stroke-width="1.3"><path d="M10 2 A8 8 0 1 1 4.5 16 L2 18 L3 14.5 A8 8 0 0 1 10 2 Z"/><circle cx="6.5" cy="10" r="0.9" fill="#fff"/><circle cx="10" cy="10" r="0.9" fill="#fff"/><circle cx="13.5" cy="10" r="0.9" fill="#fff"/></svg>
<div class="t" style="left:586px;top:702px;font-size:10.5px;color:#bfc3c8">Messages</div>
<div class="a" style="left:665px;top:654px;width:42px;height:42px;border-radius:50%;background:#262b33"></div>
<svg class="a" style="left:675px;top:665px" width="20" height="21" viewBox="0 0 24 24" fill="none" stroke="#fff" stroke-width="1.5"><path d="M10.3 2.5 H13.7 L14.3 5.2 A7.5 7.5 0 0 1 16.6 6.5 L19.2 5.6 L20.9 8.5 L18.8 10.3 A7.5 7.5 0 0 1 18.8 13.7 L20.9 15.5 L19.2 18.4 L16.6 17.5 A7.5 7.5 0 0 1 14.3 18.8 L13.7 21.5 H10.3 L9.7 18.8 A7.5 7.5 0 0 1 7.4 17.5 L4.8 18.4 L3.1 15.5 L5.2 13.7 A7.5 7.5 0 0 1 5.2 10.3 L3.1 8.5 L4.8 5.6 L7.4 6.5 A7.5 7.5 0 0 1 9.7 5.2 Z"/><circle cx="12" cy="12" r="3.2"/></svg>
<div class="t" style="left:667px;top:702px;font-size:10px;color:#bfc3c8">Settings</div>
<div class="a" style="left:750px;top:654px;width:42px;height:42px;border-radius:50%;background:#262b33"></div>
<svg class="a" style="left:760px;top:665px" width="21" height="21" viewBox="0 0 21 21" fill="none" stroke="#f0643a" stroke-width="1.8" stroke-linecap="round"><path d="M10.5 2.5 V10"/><path d="M6.2 5 A7 7 0 1 0 14.8 5"/></svg>
<div class="t" style="left:745px;top:702px;font-size:10px;color:#bfc3c8">Leave Class</div>
<!-- taskbar icons -->
<svg class="a" style="left:16px;top:740px" width="16" height="16" viewBox="0 0 16 16" fill="#fff"><path d="M0 2.2 L6.5 1.3 V7.6 H0 Z M7.3 1.2 L16 0 V7.6 H7.3 Z M0 8.4 H6.5 V14.7 L0 13.8 Z M7.3 8.4 H16 V16 L7.3 14.8 Z"/></svg>
<svg class="a" style="left:63px;top:739px" width="18" height="18" viewBox="0 0 18 18" fill="none" stroke="#fff" stroke-width="1.4"><circle cx="10.5" cy="7" r="5.5"/><path d="M6.5 11 L1 16.5"/></svg>
<svg class="a" style="left:109px;top:740px" width="22" height="16" viewBox="0 0 22 16" fill="none" stroke="#fff" stroke-width="1.3"><rect x="5" y="1" width="12" height="14"/><path d="M1 3 V13 M21 3 V13"/></svg>
<svg class="a" style="left:160px;top:738px" width="23" height="19" viewBox="0 0 23 19"><path d="M1 2 H9 L11 4 H22 V18 H1 Z" fill="#f5c04a"/><path d="M1 6 H22 V18 H1 Z" fill="#fcd873"/><path d="M7 18 V12 H16 V18 H13.5 V14 H9.5 V18 Z" fill="#2d8fd5"/></svg>
<div class="a" style="left:151px;top:766px;width:40px;height:2px;background:#d97fcb"></div>
<svg class="a" style="left:208px;top:736px" width="25" height="25" viewBox="0 0 25 25"><circle cx="11.5" cy="11.5" r="11" fill="#dd4b3e"/><path d="M11.5 11.5 L22.5 11.5 A11 11 0 0 1 6 21 Z" fill="#f2c230"/><path d="M11.5 11.5 L6 21 A11 11 0 0 1 1.2 6 Z" fill="#1ca25b"/><circle cx="11.5" cy="11.5" r="5" fill="#fff"/><circle cx="11.5" cy="11.5" r="3.8" fill="#3b7ee8"/><circle cx="18" cy="18" r="6.5" fill="#4a3b3a" stroke="#ddd" stroke-width="0.8"/><circle cx="17" cy="16" r="2.5" fill="#d9b09a"/></svg>
<div class="a" style="left:200px;top:766px;width:40px;height:2px;background:#d97fcb"></div>
<div class="a" style="left:245px;top:728px;width:48px;height:40px;background:#333"></div>
<svg class="a" style="left:257px;top:736px" width="25" height="26" viewBox="0 0 25 26"><rect x="0" y="0" width="23" height="23" rx="4" fill="#2f8ff0"/><path d="M5 6 C6 4 8 4 9 6 L10 8 C10 9 9 10 8.5 10.5 C9.5 13 11 14.5 13 15.5 C13.5 15 14.5 14 15.5 14 L17.5 15 C19 16 19 17.5 17.5 19 C14 21 5 14 5 6 Z" fill="#fff"/><path d="M14 4 H18 V8 H14 Z M18 5 L20 4 V8 L18 7" fill="#fff"/><circle cx="19" cy="20" r="5.5" fill="#f0f0f0" stroke="#ccc" stroke-width="0.6"/><path d="M16.5 18 L21.5 20 L18.5 21 L17.5 23.5 Z" fill="#2f8ff0"/></svg>
<div class="a" style="left:245px;top:766px;width:48px;height:2px;background:#d97fcb"></div>
<!-- tray -->
<svg class="a" style="left:1123px;top:744px" width="13" height="8"><path d="M1 7 L6.5 1.5 L12 7" fill="none" stroke="#fff" stroke-width="1.2"/></svg>
<svg class="a" style="left:1145px;top:741px" width="17" height="13" viewBox="0 0 17 13" fill="none" stroke="#fff" stroke-width="1"><rect x="5.5" y="3.5" width="10" height="7"/><rect x="7" y="5" width="7" height="4" fill="#fff"/><path d="M1 7 H5 M2 4 V7 M4 4 V7 M3 7 V12"/></svg>
<svg class="a" style="left:1171px;top:740px" width="15" height="15" viewBox="0 0 15 15" fill="none" stroke="#fff" stroke-width="1.1"><path d="M1 14 A13 13 0 0 1 14 1"/><path d="M4 14 A10 10 0 0 1 14 4"/><path d="M7 14 A7 7 0 0 1 14 7"/><circle cx="12.5" cy="12.5" r="1.3" fill="#fff"/></svg>
<svg class="a" style="left:1193px;top:740px" width="17" height="15" viewBox="0 0 17 15" fill="none" stroke="#fff" stroke-width="1.1"><path d="M1 5 H4 L8 1.5 V13.5 L4 10 H1 Z"/><path d="M10.5 5 A3 3 0 0 1 10.5 10"/><path d="M12.5 3 A6 6 0 0 1 12.5 12"/><path d="M14.5 1 A9 9 0 0 1 14.5 14"/></svg>
<div class="t" style="left:1219px;top:742px;font-size:11.5px;color:#fff">ENG</div>
<div class="t" style="left:1267px;top:733px;font-size:11.5px;color:#fff">15:49</div>
<div class="t" style="left:1258px;top:750px;font-size:11.5px;color:#fff">5/2/2565</div>
<svg class="a" style="left:1325px;top:740px" width="17" height="17" viewBox="0 0 17 17"><path d="M0.5 0.5 H16 V11.5 H8 L5 15 V11.5 H0.5 Z" fill="#fff"/><path d="M3 3.5 H13.5 M3 6 H13.5 M3 8.5 H10" stroke="#000" stroke-width="0.9"/><circle cx="13.5" cy="13" r="3" fill="#000" stroke="#fff" stroke-width="0.8"/></svg>
<div class="a" style="left:1361px;top:728px;width:1px;height:40px;background:#555"></div>
<svg class="a" style="left:1059px;top:617px" width="18" height="18" viewBox="0 0 18 18"><circle cx="9" cy="9" r="8.3" fill="#3b8de6"/><path d="M4.5 11.5 V5 H13.5 V11.5 L9 8.5 Z" fill="#fff"/><path d="M4.5 13 L9 10 L13.5 13" fill="none" stroke="#cfe3fa" stroke-width="1"/></svg>
</body></html>
